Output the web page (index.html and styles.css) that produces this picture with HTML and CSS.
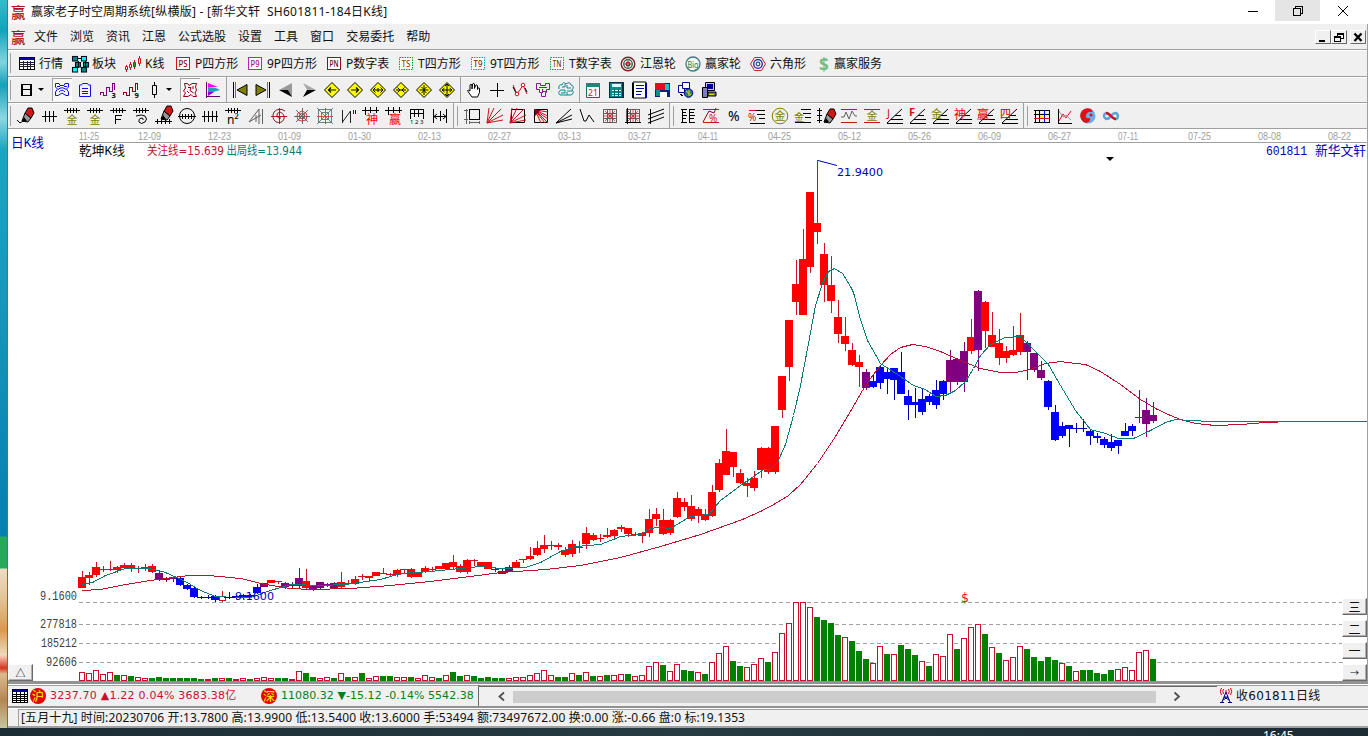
FILE: index.html
```html
<!DOCTYPE html>
<html lang="zh-CN">
<head>
<meta charset="utf-8">
<title>赢家老子时空周期系统</title>
<link rel="stylesheet" href="styles.css">
</head>
<body class="screen">
<div class="desktop">
  <div class="wallpaper"></div>
  <main class="window">
    <header class="titlebar">
      <span class="brand">赢</span>
      <span class="title">赢家老子时空周期系统<span class="doc">[纵横版] - [新华文轩  SH601811-184日K线]</span></span>
      <div class="caption">
        <span class="cap"><svg width="12" height="12"><path class="k" d="M1 6.500H11"/></svg></span>
        <span class="cap cap-on"><svg width="12" height="12"><path class="k" d="M1.500 3.500H8.500V10.500H1.500ZM3.500 3V1.500H10.500V8.500H9"/></svg></span>
        <span class="cap"><svg width="12" height="12"><path class="k smooth" d="M1 1L11 11M11 1L1 11"/></svg></span>
      </div>
    </header>
    <nav class="menubar">
      <span class="brand">赢</span>
      <span>文件</span><span>浏览</span><span>资讯</span><span>江恩</span><span>公式选股</span><span>设置</span><span>工具</span><span>窗口</span><span>交易委托</span><span>帮助</span>
      <div class="mdi">
        <span class="mdi-btn"><svg width="14" height="13"><path d="M3 9H9V11H3Z"/></svg></span>
        <span class="mdi-btn"><svg width="14" height="13"><path class="k" d="M2.500 5.500H8.500V10.500H2.500ZM2 6.500H9M5.500 5V2.500H11.500V7.500H9M5 3.500H12"/></svg></span>
        <span class="mdi-btn mdi-close"><svg width="14" height="13"><path class="k2" d="M3.500 2.500L10.500 10M10.500 2.500L3.500 10"/></svg></span>
      </div>
    </nav>
    <div class="toolbar views" id="views"></div>
    <div class="toolbar tools" id="tools"></div>
    <div class="toolbar tools drawing" id="drawing"></div>
    <section class="chart">
      <svg id="plot" class="plot" width="1359" height="552" viewBox="8 129 1359 552"></svg>
      <button class="pane-btn fold">△</button>
      <div class="pane-stack">
        <button class="pane-btn">三</button><button class="pane-btn">二</button><button class="pane-btn">一</button><button class="pane-btn">→</button>
      </div>
    </section>
    <div class="ticker">
      <div class="quotes">
        <svg width="16" height="14" class="sheet"><rect width="16" height="14"/><path class="w" d="M1 3H15V13H1Z"/><path class="blue" d="M1 1H15V3H1Z"/><path class="k" d="M1 5.500H15M1 7.500H15M1 9.500H15M1 11.500H15M4.500 3V13M8.500 3V13M12.500 3V13"/></svg>
        <span class="coin">沪</span>
        <span class="up q1">3237.70 ▲1.22 0.04% 3683.38亿</span>
        <span class="coin">深</span>
        <span class="down q2">11080.32 ▼-15.12 -0.14% 5542.38</span>
      </div>
      <div class="scroll">
        <svg class="arrow" width="33" height="13"><path class="chev" d="M24 2.500L19.500 6.500L24 10.500"/></svg>
        <div class="thumb"></div>
        <svg class="arrow" width="60" height="13"><path class="chev" d="M18.500 2.500L23 6.500L18.500 10.500"/></svg>
      </div>
      <div class="feed">
        <svg width="14" height="17" viewBox="0 0 14 17"><path class="navy" d="M7 5L3 15M7 5L11 15M5 10H9M4 13L9 10M10 13L5 10M1 15.500H5M9 15.500H13"/><path class="redl" d="M2.500 1Q0 4 2.500 8M11.500 1Q14 4 11.500 8M4.500 2Q3 4 4.500 7M9.500 2Q11 4 9.500 7M7 3V6"/></svg>
        <span>收601811日线</span>
      </div>
    </div>
    <footer class="status"><span class="status-text">[五月十九] 时间:20230706 开:13.7800 高:13.9900 低:13.5400 收:13.6000 手:53494 额:73497672.00 换:0.00 涨:-0.66 盘:0 标:19.1353</span></footer>
  </main>
</div>
<div class="taskbar"><span class="clock">16:45</span></div>
<script src="app.js"></script>
</body>
</html>
```
FILE: styles.css
```css
.screen{margin:0;width:1368px;height:736px;overflow:hidden;background:#fff;color:#111;font:12px/16px "Noto Sans","Noto Sans CJK SC",sans-serif}
.desktop{display:flex;height:728px}
.wallpaper{width:8px;flex:none;box-sizing:border-box;border-right:1px solid #1b8b9c;background:linear-gradient(#35bccb 0,#12a3bc 30px,#7fd5de 62px,#159fba 85px,#8bd7e0 118px,#1aa5c0 150px,#1797b9 300px,#0580b0 536px,#27a95b 537px,#27a95b 568px,#f3dcc0 569px,#e8c090 600px,#d99a4a 630px,#f2d9b8 655px,#cf3a20 668px,#e2b98a 674px,#b9854f 700px,#c9c29a 727px)}
.window{flex:1;min-width:0;display:flex;flex-direction:column;background:#f0f0f0;box-sizing:border-box}
.titlebar{height:24px;flex:none;background:#fff;display:flex;align-items:center}
.brand{width:15px;margin:0 5px 0 3px;color:#b01020;font:500 14.500px/18px "Noto Sans CJK SC",sans-serif}
.title{white-space:pre}
.doc{letter-spacing:.25px}
.caption{margin-left:auto;display:flex;align-self:flex-start;padding-right:3px}
.cap{width:45px;height:21px;display:flex;align-items:center;justify-content:center}
.cap-on{background:#e5e5e5}
.k{fill:none;stroke:#000;stroke-width:1;shape-rendering:crispEdges}
.smooth{shape-rendering:auto}
.k2{fill:none;stroke:#000;stroke-width:2.200}
.menubar{height:26px;flex:none;display:flex;align-items:center;gap:12px;border-bottom:1px solid #a0a0a0;border-right:1px solid #a0a0a0;box-sizing:border-box}
.menubar .brand{margin:0 -4px 0 3px}
.mdi{margin-left:auto;display:flex;padding-right:1px}
.mdi-btn{width:16px;height:14px;box-sizing:border-box;border:1px solid;border-color:#fff #696969 #696969 #fff;display:flex}
.mdi-close{margin-left:3px}
.toolbar{height:26px;flex:none;box-sizing:border-box;border-bottom:1px solid #a0a0a0;border-right:1px solid #a0a0a0;box-shadow:inset 0 1px #fff;align-items:center}
.toolbar.views{height:27px}
.views{display:grid;grid-template-columns:10px 53px 53px 50px 72px 79px 72px 72px 79px 71px 65px 65px 66px 90px}
.view{display:flex;align-items:center;gap:3px;white-space:nowrap;padding-top:1px}
.view:last-child{gap:1px}
.tools{display:flex}
.cell{width:23px;height:23px;flex:none;display:flex;align-items:center;justify-content:center}
.cell-on{box-shadow:inset 1px 1px #a0a0a0,inset -1px -1px #fff;background:#f8f8f8;width:20px;margin:0 1.500px}
.grip{width:3px;height:20px;box-sizing:border-box;border-right:1px solid #a0a0a0;margin:0 2px 0 0}
.first{margin-right:3px}
.bar{width:1px;height:25px;background:#a0a0a0;margin:0 1px 0 2px}
.caret{width:13px;height:23px;flex:none;display:flex;align-items:center}
.ico{display:block;overflow:visible}
.chart{height:552px;flex:none;position:relative;background:#fff;border-right:1px solid #a0a0a0}
.plot{display:block}
.pane-btn{width:25px;height:17px;padding:0;box-sizing:border-box;border:1px solid;border-color:#fff #696969 #696969 #fff;box-shadow:inset -1px -1px #b0b0b0;background:#f0f0f0;color:#111;font:12px/12px "Noto Sans CJK SC",sans-serif}
.fold{position:absolute;left:0;bottom:0;width:25px;font-size:10px}
.pane-stack{position:absolute;right:0;bottom:0;display:flex;flex-direction:column;gap:5px}
.pane-stack .pane-btn:last-child{font-size:9px}
.ticker{height:27px;flex:none;display:flex;box-sizing:border-box;border-top:3px solid #929292;border-bottom:2px solid #929292;box-shadow:inset 0 1px #fff,inset 0 2px #a0a0a0;padding-top:1px}
.quotes{width:471px;flex:none;padding-left:4px;display:flex;align-items:center;overflow:hidden;white-space:nowrap;font:11px/16px "DejaVu Sans","Noto Sans CJK SC",sans-serif;box-sizing:border-box;border-right:1px solid #696969}
.sheet{margin-right:2px;flex:none}
.w{fill:#fff}
.blue{fill:#0000a0}
.coin{width:16px;height:16px;flex:none;border-radius:50%;background:#e60000;color:#ff0;text-align:center;font:12px/15px "Noto Sans CJK SC",sans-serif}
.up{color:#c8102e}
.down{color:#087f18}
.q1{width:211px;flex:none;margin-left:4px;letter-spacing:.22px}
.q2{margin-left:4px;letter-spacing:.05px}
.scroll{width:738px;flex:none;display:flex;align-items:center;background:#f0f0f0;box-sizing:border-box;border-top:1px solid #696969;margin-top:1px;padding-left:1px}
.thumb{width:643px;height:12px;background:#cdcdcd}
.chev{fill:none;stroke:#505050;stroke-width:1.800}
.feed{display:flex;align-items:center;gap:3px;padding-left:2px;white-space:nowrap;font:12px/16px "DejaVu Sans","Noto Sans CJK SC",sans-serif;letter-spacing:.3px}
.navy{fill:none;stroke:#000080}
.redl{fill:none;stroke:#d00020}
.status{height:20px;flex:none;display:flex;align-items:center;box-sizing:border-box;border-top:1px solid #fff;border-bottom:2px solid #a0a0a0;padding-left:5px}
.status-text{border-left:1px solid #a0a0a0;border-top:1px solid #a0a0a0;margin-left:5px;padding-left:2px;flex:1;white-space:pre;height:16px;line-height:16px;letter-spacing:.12px}
.taskbar{height:8px;background:linear-gradient(90deg,#1c2c34,#263b42 50%,#1d2b33);overflow:hidden;color:#fff}
.clock{display:block;margin-left:1263px;font:12px/16px "Noto Sans",sans-serif}
```
FILE: app.js
```js
const K='#000',R='#d01020',O='#808000',G='#606060';
const P=(d,c=K,w=1)=>`<path d="${d}" fill="none" stroke="${c}" stroke-width="${w}" shape-rendering="${/[QCAa]/.test(d)?'auto':'crispEdges'}"/>`;
const S=(d,c=K,w=1)=>`<path d="${d}" fill="none" stroke="${c}" stroke-width="${w}"/>`;
const F=(d,c=K,s='none')=>`<path d="${d}" fill="${c}" stroke="${s}"/>`;
const T=(t,x,y,s,c=K,x2='')=>`<text x="${x}" y="${y}" font-size="${s}" fill="${c}" font-family="Noto Sans,Noto Sans CJK SC,sans-serif" ${x2}>${t}</text>`;
const C=(r,c,w=1,f='none',x=9,y=9)=>`<circle cx="${x}" cy="${y}" r="${r}" fill="${f}" stroke="${c}" stroke-width="${w}"/>`;
const comb=P('M1 3.500H17M4.500 1V6M7.500 1V6M10.500 1V6M13.500 1V6');
const pen=(x=0,y=0)=>`<g transform="translate(${x} ${y})">${F('M5 14L8 6L14 11L11 15Z','#999',K)}${F('M8 6L11 1H15L17 6L14 11Z','#d01818',K)}${F('M5 15L7 10L10 14Z')}</g>`;
const tag=(t,b,c,dash='')=>`<rect x="2.500" y="2.500" width="13" height="12" fill="#fff" stroke="${b}" ${dash}/>`+T(t,4.500,11.500,8,c,'font-weight="500" textLength="9" lengthAdjust="spacingAndGlyphs"');
const dia=F('M9 1.500L16.500 9L9 16.500L1.500 9Z','#ff0',K);
const fanLines=c=>S('M1 16L15 2M1 16L17 8M1 16L8 1M1 16L3 1M1 16L17 13',c);
const lad=P('M1 16.500H17M5 12.500H17M9 8.500H15')+S('M1 16L16 2');
const box=F('M2.500 2.500H15.500V15.500H2.500Z','none',K);
const grid=c=>S('M2.500 2V16M6.500 2V16M11.500 2V16M15.500 2V16M2 2.500H16M2 6.500H16M2 11.500H16M2 15.500H16',G)+S('M4 4L14 14M14 4L4 14M9 2V16M2 9H16',c,.7);
const redBars=P('M1 2.500H17M1 15.500H17',R);
const wave=(c,n)=>P('M1.500 14V11.500H4.500V14.500H7.500V6.500H10.500V10.500H13.500V2.500H15.500V9',c)+T(n,12.500,17,7.500,K,'font-weight="bold"');
const DASH='stroke-dasharray="1.500 1"';
const icons={
 sheet:'<rect x="1" y="2" width="16" height="13"/>'+F('M2 5H16V14H2Z','#fff')+F('M2 3H16V5H2Z','#0000a0')+P('M2 7.500H16M2 9.500H16M2 11.500H16M5.500 6V14M9.500 6V14M12.500 6V14','#223'),
 blocks:[[1,1],[10,1],[4,7],[12,7],[1,12],[10,12]].map(([x,y],i)=>`<rect x="${x}.500" y="${y}.500" width="5" height="4.500" fill="${i%3==1?'#0ff':'#088'}" stroke="#012" stroke-width="1.100"/>`).join('')+P('M6 3H10M7 6V13M14 6V12'),
 candles:P('M2.500 10V17M6.500 7V15M10.500 5V14M15.500 1V11',R)+F('M1.500 11.500H3.500V14.500H1.500ZM5.500 9.500H7.500V12.500H5.500ZM14.500 3.500H16.500V8.500H14.500Z','#fff',R)+F('M9.500 7.500H11.500V11.500H9.500Z','#2a2','#161'),
 ps:tag('PS',R,'#800020'),p9:tag('P9','#c020c0','#a01070'),pn:tag('PN','#a00020','#600020'),
 ts:tag('TS','#00a030','#a04010',DASH),t9:tag('T9','#00a0a0','#802020',DASH),tn:tag('TN','#00a030','#604010',DASH),
 target:C(6.800,'#802020',1.400)+C(4.300,'#186040',1.200)+C(1.800,R,1.400)+S('M9 5V13M5 9H13','#444',.6),
 big:C(7,'#4a7780',1.300,'#edf8f4')+T('Big',3.500,12.500,9,'#288050','textLength="11" lengthAdjust="spacingAndGlyphs"'),
 hex:F('M5.500 2.500H12.500L16.500 9L12.500 15.500H5.500L1.500 9Z','none','#d02030')+C(4.300,'#2020a0',1.300)+C(1.800,'#2050a0',1.200),
 dollar:T('$',4,15.500,17,'#76bd7e','font-weight="bold"'),
 day:P('M4.500 3V15M13.500 3V15',K,2)+P('M4 3.500H14M4 8.500H14M4 14.500H14'),
 caret:F('M1 7H7L4 10Z'),
 crab:S('M2.500 2.500H6L7 4.500H11L12 2.500H15.500V6L13.500 8L15.500 11V14.500H13L9 12L5 14.500H2.500V11L4.500 8L2.500 6ZM5 8.500Q9 5 13 8.500M6 11Q9 7.500 12 11M4 5.500H7M11 5.500H14','#1010e0'),
 clip:S('M6.500 2.500H11.500L12.500 4H14.500V15.500H3.500V4H5.500ZM6 7.500H12M6 10.500H12M6 12.500H12','#1010e0'),
 w3:wave('#800080','3'),w9:wave('#800020','9'),
 candle:P('M9.500 1V17')+F('M7.500 4.500H11.500V13.500H7.500Z','#f0f0f0',K),
 blob:S('M3.500 2.500H6.500L8 4.500L11 2.500H15.500L14.500 6L15.500 9L14 12L15.500 15.500H12L10 13.500L7 15.500H2.500L4.500 12L2.500 10L4.500 7ZM7 6.500H10L9 9.500L12.500 12M6 10L8 12M12 5V8','#900018'),
 flag:F('M4 2L14 6H4Z','#f0f')+F('M4 6L12 7L16 9L9 11H4Z','#20a0b0')+F('M4 11H10L4 15Z','#80c')+P('M2.500 1V17M2 15.500H16','#606'),
 start:P('M2.500 1V17')+P('M4.500 1V17',O)+F('M16 3.500V14.500L6 9Z',O,K),
 end:P('M15.500 1V17')+P('M13.500 1V17',O)+F('M2 3.500V14.500L12 9Z',O,K),
 left:F('M2 9L15 2V16L11 9Z','#999')+F('M2 9H11L15 16Z'),
 right:F('M16 9L3 2L7 9Z','#aaa')+F('M16 9H7L3 16Z'),
 dl:dia+S('M5 9H13M8 6.500L5.500 9L8 11.500',K,1.2),dr:dia+S('M5 9H13M10 6.500L12.500 9L10 11.500',K,1.2),
 dlr:dia+S('M4 9H14M6.500 6.500L4 9L6.500 11.500M11.500 6.500L14 9L11.500 11.500M9 7V11'),dx:dia+S('M4 9H14M5.500 6.500L8 9L5.500 11.500M12.500 6.500L10 9L12.500 11.500'),
 dud:dia+S('M9 4V14M4.500 9H13.500M6.500 6L9 8.500L11.500 6M6.500 12L9 9.500L11.500 12'),dall:dia+S('M9 3V15M4 9H14M7 5L9 3L11 5M7 13L9 15L11 13M6.500 7L4 9L6.500 11M11.500 7L14 9L11.500 11'),
 hand:F('M7 16L3 10.500Q2 8 5 10V4Q6 2.500 7 4V8L7.500 3Q9 1.500 9.500 3V7.500L10.500 4.500Q12 3 12.500 5V8.500Q14 5 14.500 8V11.500L12.500 16Z','#fff',K),
 plus:P('M9.500 2V16M2 9.500H16'),
 nodes:S('M2 4L6 13L9 9L12 4L16 13',R)+S('M2 6L5 12M14 7L16 11')+C(1.800,R,1,'#fff',6,13)+C(1.800,R,1,'#fff',12,4),
 pipes:S('M2.500 2.500H6.500V4.500H11.500V2.500H15.500V8.500H12.500V11.500H11.500V15.500H7.500V11.500H5.500V8.500H2.500ZM5 6.500H13M8.500 8V12M8 10.500H12','#9010a0'),
 coral:S('M2 8Q1 3 5 4Q6 0 9 3Q13 0 14 4Q18 5 15 9Q18 12 14 14H3Q0 11 4 9H8M5 6H8V3M10 4V7H14M10 10H15M4 12H8V9M10 14V11','#108090'),
 cal:F('M2.500 4.500H15.500V16.500H2.500Z','#fff','#186860')+F('M2 2H16V6H2Z','#28827b')+T('21',4,15,9,R,'textLength="10" lengthAdjust="spacingAndGlyphs"'),
 calc:F('M2 1H17V17H2Z','#003040')+F('M3 2H15V16H3Z','#009090')+F('M5 3H14V6H5Z','#dff')+P('M5 9.500H14M5 12.500H14M5 14.500H14','#dff')+P('M7.500 8V16M11.500 8V16','#006060'),
 note:F('M3 1H16V17H3Z','#fff',K)+P('M6 4.500H14M6 7.500H14M6 10.500H12M6 13.500H11','#0000a0')+P('M2.500 2V17',K,2)+P('M15.500 2V17','#0000a0',2),
 disk:F('M2 2H17V16H2Z','#102080')+F('M2 2H12V9H2Z','#d81020')+F('M12 3H16V9H12Z','#20c0d0')+F('M7 11H14V16H7Z','#fff')+F('M3 9H7V15H3Z','#089090'),
 net:F('M2.500 4.500H8.500V11.500H2.500Z','#fff','#0000a0')+F('M6.500 1.500H13.500V7.500H6.500Z','#fff','#0000a0')+C(4.300,'#000080',1,'#2a8070',12.5,12)+S('M10 10L15 14M13 9V15','#dd0')+P('M4 13L7 15'),
 pc:F('M6.500 1.500H15.500V9.500H6.500Z','#ccc',K)+F('M8 3H14V8H8Z','#0000a0')+F('M3.500 6.500H8.500V16.500H3.500Z','#8080b0',K)+F('M9 11H17V15H9Z','#777',K)+P('M10 13H15','#dd0'),
 pen:pen()+S('M0 13L3 16L6 14'),
 hash3:P('M2 9.500H17M5.500 4V15M9.500 4V15M13.500 4V15'),hash4:P('M1 9.500H17M3.500 4V15M7.500 4V15M11.500 4V15M15.500 4V15'),
 gold:comb+T('金',3.5,16.500,11,O),eff:comb+P('M6.500 17V8.500H13M7 12.500H12'),
 spiral:comb+S('M4 9Q10 7 13 9Q16 12 13 15Q9 18 7 15Q6 12 9 11Q12 11 11 13'),
 penrule:pen(1,-2)+P('M0 14.500H17M2.500 12V17M6.500 12V17M10.500 12V17M14.500 12V17'),
 dial:C(7.500,K)+P('M0 9.500H18M4.500 7V12M7.500 7V12M10.500 7V12M13.500 7V12'),
 n2:comb+T('n²',3,17,12),tri:S('M2 15L12 2V17M2 15L14 8M9 15V8M15.500 2V17',G),
 spin:P('M9.500 1V17M1 9.500H17',R)+S('M15 4Q9 0 4 5Q1 11 6 15Q12 17 14 12Q15 7 10 5Q6 6 7 9Q8 12 11 11','#802020'),
 star:S('M9.500 1V17M1 9.500H17M3 3L15 15M15 3L3 15','#577')+S('M9 4L13 6L14 9L13 13L9 14L5 13L4 9L5 6Z',R,.8)+C(2.500,'#a44',1.200),
 starbox:S('M2.500 2.500H15.500V15.500H2.500ZM5.500 5.500H12.500V12.500H5.500ZM1 1L17 17M17 1L1 17','#577',.9)+S('M9.500 1V17M1 9.500H17','#c44',.9),
 nn:S('M3.500 3V16M3.500 15L11.500 4V16M14.500 3V7M16.500 3V7','#222'),
 shen:P('M0 3.500H17M3.500 0V8M8.500 0V6M14.500 0V6')+T('神',4,16.500,12,'#f00'),ying:P('M0 3.500H17M3.500 0V8M8.500 0V6M14.500 0V6')+T('赢',4,16.500,12,'#f00'),
 rule:P('M1.500 2.500H16M1.500 6.500H16M2.500 2V12M6.500 2V10M10.500 2V10M15.500 2V12')+T('1 2 3',2,16.500,6,K),
 span:P('M2.500 2V16M15.500 2V16M9.500 4V14M3 9.500H15')+S('M6 7L3 9.500L6 12M12 7L15 9.500L12 12'),
 rect:P('M6.500 2.500H16.500V12.500H6.500Z')+P('M3.500 2V17M1 3.500H5M1 12.500H5M6 15.500H17M6.500 14V17M16.500 14V17',G),
 fanR:fanLines(R),fanB:box+fanLines(R),fanC:box+S('M3 3L16 16M3 3L16 9M3 3L9 16M3 3L16 12M3 3L13 16M3 3L16 5',R)+F('M3 3H9L3 9Z','#803'),
 fanK:S('M1 16L16 2M1 16L17 8M1 16L17 12'),zig:S('M2 2L6 14L8 14L11 8L16 15',K),
 gridR:grid(R),gridS:grid(R)+P('M3 1V17M1 15.500H17'),para:S('M3.500 2V17M1 8L17 2M1 12L17 6M1 16L17 10'),
 ruler:P('M2 2.500H8M3 5.500H7M3 8.500H8M3 11.500H7M2 15.500H8M11 2.500H16M11 5.500H15M11 8.500H16M11 11.500H15M11 15.500H16')+P('M3.500 2V16M10.500 2V16'),
 redpct:redBars+S('M1 15L7 4L12 6L14 1','#803')+T('%',7,15,10,R),pct:T('%',3,14,14),
 pctlines:P('M2 3.500H17M9 7.500H17M11 11.500H17M2 16.500H17')+P('M1 3.500H8',R)+T('%',0,14,10,R),
 goldc:C(7.800,O,1)+T('金',3.500,13,11,O),goldl:P('M7 2.500H17M9 6.500H17M11 10.500H17M1 15.500H17')+T('金',0,14,10,O),
 penv:pen(2,1)+P('M2.500 1V16M0 3.500H5M0 8.500H5M0 13.500H5'),
 wavy:redBars+S('M1 10H4L6 5L9 12L12 4L15 9H17',G),goldr:redBars+T('金',3.500,13,11,O),
 fj:lad+T('J',1,10,11,R),ff:lad+T('F',0,9,11,R,'font-weight="bold"'),fg:lad+T('金',-1,11,11,O),fs:lad+T('神',-1,12,12,'#e00'),fy:lad+T('赢',-1,12,12,'#e00'),f4:lad+T('四',-1,11,11,'#c00'),
 calgrid:F('M6 6H12V12H6Z','#ff0')+P('M2.500 3V16M6.500 3V16M11.500 3V16M16.500 3V16M1 3.500H17M1 7.500H17M1 15.500H17')+P('M11.500 3V16','#00f')+P('M1 11.500H17',R),
 plot:P('M2.500 2V16.500H16')+S('M3 14L7 7L10 11L15 4',R)+S('M3 4L7 10L10 8L15 13','#999'),
 yin:C(7.500,'none',0,'#68aef0')+F('M12 2A7.500 7.500 0 1 0 7 16Q12 15 11 11Q6 12 7 8Q9 4 12 5Q15 5 12 2','#e01018')+C(1.500,'none',0,'#e01018',12,8),
 inf:S('M9 9Q5 4 2.500 7Q1 10 4 12Q7 12 9 9','#60a0d0',2.300)+S('M9 9Q13 14 15.500 11Q17 8 14 6Q11 6 9 9','#60a0d0',2.300)+S('M4 6Q6 6 9 9T14 12',R,2.300)
};
const ico=n=>`<svg class="ico" width="18" height="18" viewBox="0 0 18 18">${icons[n]}</svg>`;
document.getElementById('views').innerHTML='<span class="grip"></span>'+[['sheet','行情'],['blocks','板块'],['candles','K线'],['ps','P四方形'],['p9','9P四方形'],['pn','P数字表'],['ts','T四方形'],['t9','9T四方形'],['tn','T数字表'],['target','江恩轮'],['big','赢家轮'],['hex','六角形'],['dollar','赢家服务']].map(([i,t])=>`<span class="view">${ico(i)}<span>${t}</span></span>`).join('');
const row=s=>s.split(' ').map(n=>n=='|'?'<span class="bar"></span>':n=='g'?'<span class="grip"></span>':n=='g1'?'<span class="grip first"></span>':n=='v'?`<span class="caret"><svg width="8" height="18">${icons.caret}</svg></span>`:`<span class="cell${n=='crab'||n=='blob'?' cell-on':''}">${ico(n)}</span>`).join('');
document.getElementById('tools').innerHTML=row('g1 day v crab clip w3 w9 candle v blob flag | start end left right dl dr dlr dx dud dall | hand plus nodes pipes coral | cal calc note disk net pc');
document.getElementById('drawing').innerHTML=row('g1 pen hash3 gold gold eff spiral penrule dial hash4 n2 tri spin star starbox nn shen ying rule span | g rect fanR fanB fanC fanK zig gridR gridS para | g ruler redpct pct pctlines goldc goldl penv wavy goldr fj ff fg fs fy f4 | g calgrid plot yin inf');

/* Each candle: colour, body top, body bottom, high, low */
const candles=`r577 588 571 588,r575 578 572 585,r567 575 562 577,r569 570 566 572,r569 570 561 571,r567 570 566 573,r565 568 563 569,r565 569 563 572,r568 569 566 573,r567 568 564 571,r566 572 564 573,p573 580 570 581,p579 580 577 582,p578 579 576 582,b578 585 576 586,b585 589 584 590,b588 597 586 598,b597 598 596 599,b597 598 595 599,b596 600 595 602,w596 601 591 602,b597 598 592 599,b596 597 595 599,b595 597 594 599,b595 597 594 597,b587 593 584 594,p583 587 583 587,r580 583 580 583,r581 582 581 584,p583 587 582 589,p585 586 582 588,p578 586 568 589,r581 588 569 589,p586 589 585 591,p582 588 582 589,p584 585 583 587,p583 589 582 589,r582 587 572 589,r583 584 580 585,r579 584 576 585,r576 577 574 580,r576 578 576 581,r572 576 572 576,r573 574 568 574,r574 575 573 577,r570 575 569 577,r569 570 569 574,r569 577 568 578,r572 577 572 577,r568 572 566 573,r569 570 567 572,r566 569 566 569,r563 569 563 569,r562 567 555 569,r566 572 564 573,r560 572 559 574,r560 561 559 566,r562 567 562 567,r562 569 562 569,p569 570 567 572,p571 574 568 574,p567 572 565 572,r562 567 560 568,r559 560 559 563,r556 559 547 560,r548 555 541 556,r545 549 535 553,r545 546 541 550,r545 547 543 550,r550 555 547 557,r544 554 540 557,r547 548 541 553,r533 544 527 549,r535 540 533 541,r538 539 534 542,r535 537 528 538,r530 536 529 540,r527 529 525 532,r528 534 528 537,r534 535 532 536,r533 536 532 543,r519 533 509 537,r514 519 508 526,r520 534 509 535,r520 533 519 535,r498 517 492 518,r502 507 498 511,r506 519 495 521,r509 516 507 523,r514 520 509 521,r492 516 485 517,r463 490 459 492,r451 475 429 475,r452 467 452 477,r473 483 469 484,r483 486 478 497,r478 488 471 491,r448 470 447 478,r448 472 447 474,r426 472 426 474,r376 410 376 418,r320 367 320 381,r284 302 260 315,r259 315 229 315,r192 267 192 273,r223 232 160 244,r254 285 243 302,r285 301 256 313,r317 334 300 343,r336 344 317 351,r350 365 343 366,r362 367 355 387,p372 388 369 390,b381 387 374 388,b367 383 365 389,b372 379 367 394,b368 380 368 400,b372 394 352 394,b396 405 390 420,b402 405 388 418,b399 412 389 415,b396 402 394 405,b390 405 380 409,b381 394 380 400,p360 382 350 394,p359 382 358 385,p351 382 342 392,r337 351 319 354,p291 350 290 371,r302 331 301 348,r335 347 312 347,r343 358 329 365,r351 358 346 363,r350 355 326 356,r335 352 313 355,p343 352 341 380,p353 370 353 372,p370 378 361 380,b381 407 380 410,b412 440 405 441,b426 436 422 438,b425 429 425 447,b428 429 423 433,b428 429 419 432,b431 436 429 445,b436 438 433 443,b439 445 437 448,b442 448 434 451,b440 446 440 454,b431 436 423 436,b426 431 424 436,p417 418 390 423,p410 424 398 437,p415 421 402 423`.split(',');
/* Volume bars: r = rising (outlined), g = falling (filled), then the bar's top */
const volume='r672 r673 r670 r674 r672 g675 r675 g676 r677 r678 g678 g677 g678 g678 g678 g678 g678 g679 r679 g678 r678 g678 r679 r678 g679 r678 r677 r678 g678 g678 r679 r671 g673 g677 r678 r677 g678 r673 g677 r677 g673 r678 r676 g676 g676 r677 r677 g677 r678 r675 r677 g678 r675 g672 g676 r675 g676 g678 g677 g678 g678 r678 r677 r677 r675 r673 r670 r675 g677 g677 r673 g675 r672 g676 r676 g675 r675 r674 g674 r676 r675 r666 r662 g665 r671 r664 g670 g671 r672 g674 r662 r653 r646 g661 g666 r667 r664 r658 g662 r652 r633 r623 r602 r602 r607 g617 g620 g623 g635 r637 g641 g651 g659 r663 r646 g654 r654 g645 g649 g655 r661 g666 r654 r656 r634 g649 r638 r627 r624 g634 r647 g653 r660 r657 r646 g649 g657 g661 g657 g660 r663 g666 r671 g670 g670 g673 g674 g670 r669 r667 r670 r652 r650 g659'.split(' ');
const col={r:'#f00',p:'#800080',b:'#00f',w:'#fff'};
const dark={r:'#d01020',p:'#800080',b:'#0000a8',w:'#d01020'};
let s='<path d="M79 142.500H1367" stroke="#a0a0a0"/>';
const label=(t,x,y,w,size,c,f)=>`<text x="${x}" y="${y}" textLength="${w}" lengthAdjust="spacingAndGlyphs" font-size="${size}" fill="${c}" font-family="${f},Noto Sans CJK SC,sans-serif">${t}</text>`;
const days=[['11-25',79],['12-09',138],['12-23',208],['01-09',278],['01-30',348],['02-13',418],['02-27',488],['03-13',558],['03-27',628],['04-11',698],['04-25',768],['05-12',838],['05-26',908],['06-09',978],['06-27',1048],['07-11',1118],['07-25',1188],['08-08',1258],['08-22',1328]];
days.forEach(([d,x])=>s+=label(d,x,140,/11/.test(d)?20:23,10,'#a0a0a0','Liberation Sans'));
[602.5,624.5,643.5,662.5].forEach(y=>s+=`<path d="M79 ${y}H1343" stroke="#a0a0a0" stroke-dasharray="4 3"/>`);
volume.forEach((v,i)=>{const y=+v.slice(1),x=79+7*i,h=681-y;
 s+=v[0]=='r'&&h>2?`<rect x="${x+.5}" y="${y+.5}" width="5" height="${h-1}" fill="#fff" stroke="#c8102e"/>`:`<rect x="${x}" y="${y}" width="6" height="${h}" fill="${v[0]=='g'?'#008000':'#c8102e'}"/>`});
candles.forEach((c,i)=>{const k=c[0],[t,b,h,l]=c.slice(1).split(' ').map(Number),x=82+7*i;
 s+=`<path d="M${x+.5} ${h}V${l}" stroke="${dark[k]}"/>`;
 s+=k=='w'?`<rect x="${x-2.500}" y="${t+.5}" width="6" height="${b-t-1}" fill="#fff" stroke="#d01020"/>`:`<rect x="${x-4}" y="${t}" width="8" height="${b-t}" fill="${b-t<2?dark[k]:col[k]}"/>`});
const slow='82,590 100,589 120,585 150,580 165,578 180,576 190,575 208,575 240,578 265,584 290,588 310,589 350,588 390,585 430,581 470,576 500,572 545,569 580,565 620,557 660,546 700,534 742,519 760,511 775,503 788,495 800,484 817,463 835,436 850,411 862,390 870,378 880,365 890,354 900,347 912,344 925,346 940,351 960,360 980,368 1000,372 1015,372 1030,369 1045,363 1060,361 1075,363 1085,364 1100,371 1120,384 1140,399 1155,408 1170,415 1180,419 1195,423 1215,425 1240,424 1265,422 1290,421';
const fast='82,584 92,582 105,575 125,568 150,568 165,572 185,581 200,590 215,596 235,597 250,597 270,590 290,584 320,585 345,584 380,579 400,573 430,571 460,568 480,566 500,568 525,567 540,562 560,551 575,546 600,544 620,536 640,534 650,528 658,527 670,528 690,516 708,514 720,500 740,485 763,469 770,469 777,462 785,444 793,415 800,385 808,343 815,305 822,283 828,271 834,268 842,273 850,286 853,292 860,319 867,340 880,363 900,376 913,385 925,389 935,396 945,395 955,390 965,381 973,368 980,355 990,344 1005,337 1020,336 1030,346 1048,364 1060,385 1075,410 1090,429 1105,433 1118,438 1133,438 1150,430 1165,422 1175,419 1190,420 1210,421 1366,421';
const line=(p,c)=>`<polyline points="${p.replace(/(\d+),(\d+)/g,'$1.500,$2.500')}" fill="none" stroke="${c}" shape-rendering="crispEdges"/>`;
s+=line(slow,'#c01030')+line(fast,'#0a7a78')+'<path d="M818 160.500L837 165.500" stroke="#00a"/><path d="M1106 157H1114L1110 161Z"/>';
s+=label('日K线',11,147,33,13,'#0000c0','Liberation Mono')+label('乾坤K线',79,155,46,13,'#111','Liberation Mono')+label('关注线=15.639',147,155,77,12,'#c8102e','DejaVu Sans')+label('出局线=13.944',226.5,155,75.500,12,'#087a78','DejaVu Sans')
 +label('601811',1266,155,41,13,'#0000c0','Liberation Mono')+label('新华文轩',1315,155,51,13,'#0000c0','Noto Sans CJK SC')+label('21.9400',837,176,46,11,'#0000c0','DejaVu Sans')+label('9.1600',235,600,39,11,'#0000c0','DejaVu Sans')+'<path d="M224 597.500H235" stroke="#0000a8"/>'
 +label('9.1600',40,600,37,12,'#404040','Liberation Mono')+label('277818',40,628,37,12,'#404040','Liberation Mono')+label('185212',41,647,36,12,'#404040','Liberation Mono')+label('92606',46,666,31,12,'#404040','Liberation Mono')+label('$',961,602,8,13,'#e01020','DejaVu Sans');
document.getElementById('plot').innerHTML=s;
```
